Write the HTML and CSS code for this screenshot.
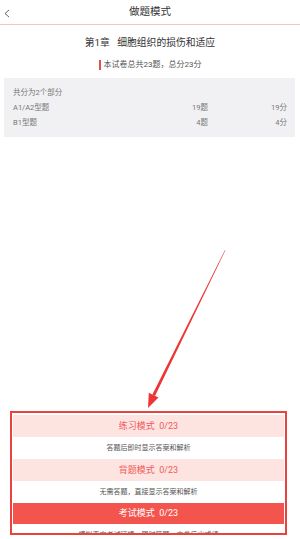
FILE: index.html
```html
<!DOCTYPE html>
<html lang="zh">
<head>
    <meta charset="UTF-8">
    <meta name="viewport" content="width=device-width, initial-scale=1.0">
    <title>做题模式</title>
    <link rel="stylesheet" href="styles.css">
</head>
<body>
    <div class="header">
        <svg class="back" width="12" height="24" viewBox="0 0 12 24">
            <polyline points="9,10 5,13.5 9,17" fill="none" stroke="#666" stroke-width="1"/>
        </svg>
        <div class="header-title">做题模式</div>
    </div>

    <div class="chapter-title">第1章&nbsp;&nbsp;&nbsp;细胞组织的损伤和适应</div>
    <div class="paper-info"><span class="paper-bar"></span>本试卷总共23题，总分23分</div>

    <div class="parts">
        <div class="parts-head">共分为2个部分</div>
        <div class="part-row">
            <span>A1/A2型题</span>
            <span class="num">19题</span>
            <span class="num">19分</span>
        </div>
        <div class="part-row">
            <span>B1型题</span>
            <span class="num">4题</span>
            <span class="num">4分</span>
        </div>
    </div>

    <div class="modes">
        <div class="mode-btn">练习模式&nbsp;&nbsp;0/23</div>
        <div class="mode-desc">答题后即时显示答案和解析</div>
        <div class="mode-btn">背题模式&nbsp;&nbsp;0/23</div>
        <div class="mode-desc">无需答题，直接显示答案和解析</div>
        <div class="mode-btn exam">考试模式&nbsp;&nbsp;0/23</div>
        <div class="mode-desc">模拟真实考试环境，限时答题，交卷后出成绩</div>
    </div>

    <!-- 标注箭头 -->
    <svg class="arrow" width="300" height="539" viewBox="0 0 300 539">
        <polygon points="225,250 225.4,250.3 155,396 152.4,394.6" fill="#ee3535"/>
        <polygon points="148,408 158.5,397.5 148.8,392.8" fill="#ee3535"/>
    </svg>
</body>
</html>
```

FILE: styles.css
```css
* {
    box-sizing: border-box;
}
body {
    font-family: 'Roboto', 'Noto Sans CJK SC', sans-serif;
    margin: 0;
    width: 300px;
    height: 539px;
    background-color: #fff;
    color: #333;
    display: flex;
    flex-direction: column;
    position: relative;
    overflow: hidden;
}
.header {
    height: 25px;
    border-bottom: 1px solid #f3c4c2;
    position: relative;
    display: flex;
    align-items: center;
    justify-content: center;
}
.back {
    position: absolute;
    left: 0;
    top: 0;
}
.header-title {
    font-size: 10.5px;
    color: #333;
    line-height: 24px;
}
.chapter-title {
    margin-top: 11px;
    font-size: 9.8px;
    line-height: 14px;
    text-align: center;
    color: #333;
}
.paper-info {
    margin-top: 9px;
    font-size: 8px;
    line-height: 12px;
    color: #555;
    display: flex;
    align-items: center;
    justify-content: center;
}
.paper-bar {
    display: inline-block;
    width: 2px;
    height: 10px;
    background-color: #e0524f;
    margin-right: 3px;
}
.parts {
    margin: 7px 5px 0 4px;
    background-color: #f1f1f3;
    padding: 7px 8px 7px 9px;
    font-size: 7.5px;
    color: #777;
}
.parts-head {
    line-height: 15px;
}
.part-row {
    display: grid;
    grid-template-columns: 1fr 50px 79px;
    line-height: 15px;
}
.part-row .num {
    text-align: right;
}
.modes {
    margin: auto 0 4px 10px;
    width: 277px;
    height: 124px;
    border: 2px solid #e8433e;
    padding: 2px 1px 0;
    overflow: hidden;
}
.mode-btn {
    height: 22px;
    line-height: 22px;
    background-color: #fde4e1;
    color: #f25a5a;
    font-size: 9px;
    text-align: center;
}
.mode-btn.exam {
    background-color: #f4544e;
    color: #fff;
    height: 21px;
    line-height: 21px;
}
.mode-desc {
    height: 22px;
    line-height: 22px;
    font-size: 7px;
    color: #555;
    text-align: center;
}
.arrow {
    position: absolute;
    left: 0;
    top: 0;
    pointer-events: none;
}
```
